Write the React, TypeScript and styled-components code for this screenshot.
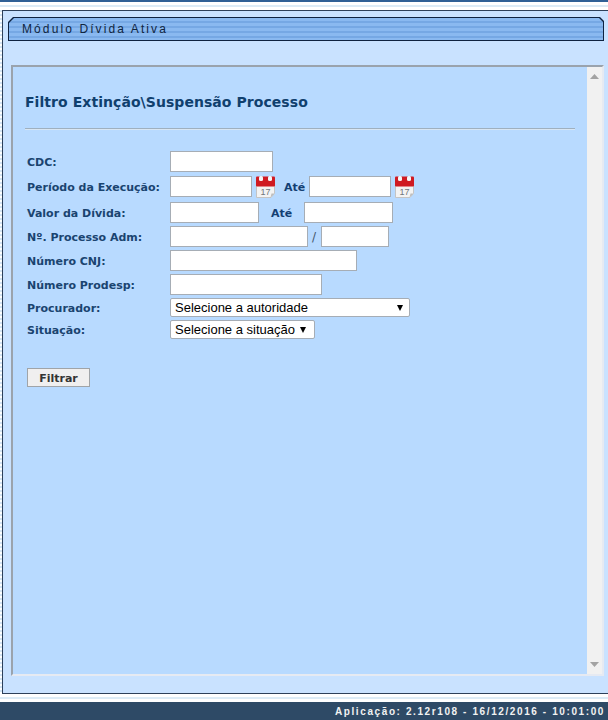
import React from 'react'
import styled, { createGlobalStyle } from 'styled-components'

const GlobalStyle = createGlobalStyle`
  html, body {
    margin: 0;
    padding: 0;
    height: 720px;
    overflow: hidden;
    background: #ffffff;
  }
`

const Page = styled.div`
  width: 608px;
  height: 720px;
  display: flex;
  flex-direction: column;
  font-family: 'DejaVu Sans', Verdana, sans-serif;
  background: repeating-linear-gradient(180deg, #ffffff 0 2px, #d5e6f5 2px 4px);
`

const TopLine = styled.div`
  height: 2px;
  flex: none;
  background: #2f6096;
`

const Stripes = styled.div`
  height: 8px;
  flex: none;
  background: linear-gradient(180deg, #ffffff 0 3px, #dcebf6 3px 5px, #ffffff 5px 8px);
`

const Frame = styled.div`
  flex: 1;
  margin: 0 0 0 2px;
  padding: 6px 4px 17px 5px;
  border: solid #2d4059;
  border-width: 1px 0 1px 1px;
  background: #c9e2ff;
  display: flex;
  flex-direction: column;
  min-height: 0;
`

const ModuleBar = styled.div`
  height: 24px;
  flex: none;
  padding: 1px;
  box-sizing: border-box;
  background: #0e2240;
  clip-path: polygon(5px 0, calc(100% - 4px) 0, 100% 4px, 100% 100%, 0 100%, 0 5px);
`

const ModuleBarInner = styled.div`
  height: 100%;
  padding: 0 0 0 13px;
  box-sizing: border-box;
  display: flex;
  align-items: center;
  clip-path: polygon(5px 0, calc(100% - 4px) 0, 100% 4px, 100% 100%, 0 100%, 0 5px);
  background: repeating-linear-gradient(180deg, #8ab9f0 0 3px, #76a8e4 3px 5px);
  font-size: 12px;
  font-family: 'Liberation Sans', Arial, sans-serif;
  letter-spacing: 2.1px;
  color: #10253f;
`

const Content = styled.div`
  flex: 1;
  margin: 24px 0 0 3px;
  display: flex;
  min-height: 0;
  border: solid;
  border-color: #9aa3ad #e6eaf2 #e6eaf2 #9aa3ad;
  border-width: 2px;
`

const Panel = styled.div`
  flex: 1;
  padding: 27px 12px 0 12px;
  background: #b8daff;
`

const Title = styled.h1`
  margin: 0 0 18px;
  font-size: 14px;
  line-height: 16px;
  font-weight: bold;
  letter-spacing: 0.06px;
  color: #10406e;
`

const Divider = styled.hr`
  margin: 0 0 21px;
  border: 0;
  border-top: 1px solid #9fb0bf;
  height: 1px;
  background: #d8e6f4;
`

const Form = styled.form`
  display: flex;
  flex-direction: column;
  padding-left: 2px;
`

const Row = styled.div<{ $gap?: number }>`
  display: flex;
  align-items: center;
  margin-bottom: ${({ $gap }) => $gap ?? 3}px;
`

const Label = styled.label`
  width: 143px;
  flex: none;
  padding-top: 2px;
  font-size: 11px;
  font-weight: bold;
  color: #1a4470;
`

const TextInput = styled.input<{ $width: number }>`
  box-sizing: border-box;
  width: ${({ $width }) => $width}px;
  height: 21px;
  flex: none;
  padding: 0 3px;
  border: 1px solid #a6adb5;
  background: #ffffff;
`

const UntilLabel = styled.span<{ $left: number; $right: number }>`
  margin: 0 ${({ $right }) => $right}px 0 ${({ $left }) => $left}px;
  padding-top: 2px;
  font-size: 11px;
  font-weight: bold;
  color: #143f73;
`

const Slash = styled.span`
  margin: 0 5px 0 4px;
  font-size: 12px;
  color: #44566a;
`

const Select = styled.select<{ $width: number; $arrowRight: number }>`
  box-sizing: border-box;
  width: ${({ $width }) => $width}px;
  height: 19px;
  flex: none;
  padding: 0 0 0 4px;
  appearance: none;
  border: 1px solid #a6adb5;
  border-radius: 2px;
  font-family: 'Liberation Sans', Arial, sans-serif;
  font-size: 13px;
  color: #000000;
  background: #ffffff url("data:image/svg+xml,%3Csvg xmlns='http://www.w3.org/2000/svg' width='6' height='6'%3E%3Cpath d='M0 0h6L3 6z' fill='%23000'/%3E%3C/svg%3E") no-repeat right ${({ $arrowRight }) => $arrowRight}px center;
`

const FilterButton = styled.button`
  width: 63px;
  height: 19px;
  margin-top: 26px;
  padding: 1px 0 0;
  border: 1px solid #a0a4a8;
  background: #f0efef;
  font-family: 'DejaVu Sans', Verdana, sans-serif;
  font-size: 11px;
  font-weight: bold;
  color: #333333;
`

const Scrollbar = styled.div`
  width: 15px;
  flex: none;
  display: flex;
  flex-direction: column;
  justify-content: space-between;
  align-items: center;
  padding: 7px 0;
  background: #f1f1f1;
`

const Footer = styled.div`
  height: 18px;
  flex: none;
  padding-right: 3px;
  display: flex;
  align-items: center;
  justify-content: flex-end;
  background: #2e4a66;
  font-family: 'Liberation Sans', Arial, sans-serif;
  font-size: 10px;
  font-weight: bold;
  letter-spacing: 1.6px;
  color: #f2f2f2;
`

const CalendarButton = styled.svg`
  flex: none;
  margin-left: 3px;
`

const CalendarIcon = () => (
  <CalendarButton width="21" height="23" viewBox="0 0 21 23">
    <path d="M1.5 9h18v9.5l-3.5 4h-14.5z" fill="#f3f3f3" stroke="#c4c4c4" />
    <path d="M15.5 22.5l1-4h3z" fill="#bdbdbd" />
    <rect x="1" y="1.5" width="19" height="10" rx="1" fill="#cf1a22" />
    <rect x="4" y="1" width="4" height="5" rx="1.5" fill="#f6f6f6" />
    <rect x="13" y="1" width="4" height="5" rx="1.5" fill="#f6f6f6" />
    <text x="5.5" y="20" fontSize="9" fontFamily="Liberation Sans" fill="#6f767d">17</text>
  </CalendarButton>
)

const ScrollArrow = ({ down }: { down?: boolean }) => (
  <svg width="9" height="5" viewBox="0 0 9 5">
    <path d={down ? 'M0 0h9L4.5 5z' : 'M0 5h9L4.5 0z'} fill="#a3a3a3" />
  </svg>
)

export default function App() {
  return (
    <Page>
      <GlobalStyle />
      <TopLine />
      <Stripes />
      <Frame>
        <ModuleBar>
          <ModuleBarInner>Módulo Dívida Ativa</ModuleBarInner>
        </ModuleBar>
        <Content>
          <Panel>
            <Title>Filtro Extinção\Suspensão Processo</Title>
            <Divider />
            <Form>
              <Row>
                <Label>CDC:</Label>
                <TextInput $width={103} />
              </Row>
              <Row $gap={4}>
                <Label>Período da Execução:</Label>
                <TextInput $width={82} />
                <CalendarIcon />
                <UntilLabel $left={8} $right={4}>Até</UntilLabel>
                <TextInput $width={82} />
                <CalendarIcon />
              </Row>
              <Row>
                <Label>Valor da Dívida:</Label>
                <TextInput $width={89} />
                <UntilLabel $left={12} $right={12}>Até</UntilLabel>
                <TextInput $width={89} />
              </Row>
              <Row>
                <Label>Nº. Processo Adm:</Label>
                <TextInput $width={138} />
                <Slash>/</Slash>
                <TextInput $width={68} />
              </Row>
              <Row>
                <Label>Número CNJ:</Label>
                <TextInput $width={187} />
              </Row>
              <Row>
                <Label>Número Prodesp:</Label>
                <TextInput $width={152} />
              </Row>
              <Row>
                <Label>Procurador:</Label>
                <Select $width={240} $arrowRight={6}>
                  <option>Selecione a autoridade</option>
                </Select>
              </Row>
              <Row>
                <Label>Situação:</Label>
                <Select $width={145} $arrowRight={8}>
                  <option>Selecione a situação</option>
                </Select>
              </Row>
              <div>
                <FilterButton type="button">Filtrar</FilterButton>
              </div>
            </Form>
          </Panel>
          <Scrollbar>
            <ScrollArrow />
            <ScrollArrow down />
          </Scrollbar>
        </Content>
      </Frame>
      <Stripes />
      <Footer>Aplicação: 2.12r108 - 16/12/2016 - 10:01:00</Footer>
    </Page>
  )
}
